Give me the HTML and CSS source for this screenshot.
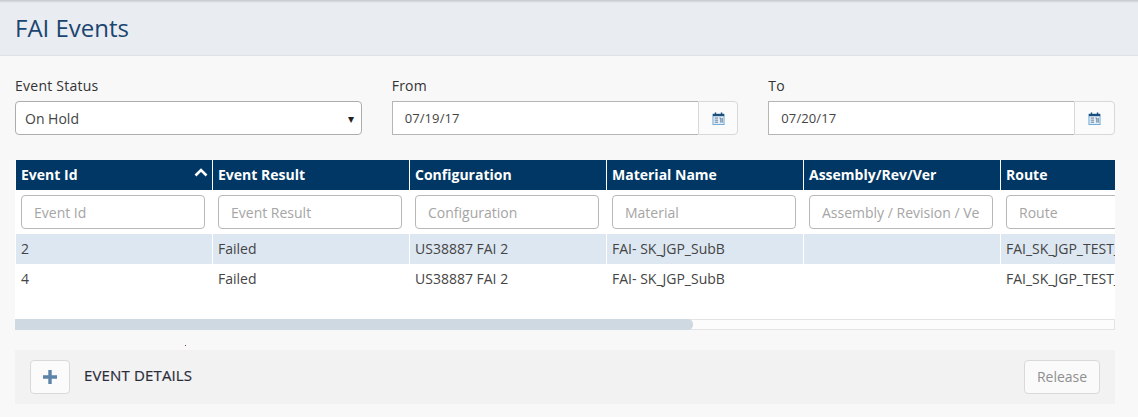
FILE: index.html
```html
<!DOCTYPE html>
<html lang="en">
<head>
    <meta charset="UTF-8">
    <title>FAI Events</title>
    <link rel="stylesheet" href="styles.css">
</head>
<body>
    <div class="page-header">
        <h1>FAI Events</h1>
    </div>

    <div class="content">
        <div class="filters">
            <div class="field">
                <label>Event Status</label>
                <div class="status-select">
                    <span>On Hold</span>
                    <span class="caret">&#9662;</span>
                </div>
            </div>
            <div class="field">
                <label>From</label>
                <div class="date-group">
                    <input class="date-input" type="text" value="07/19/17">
                    <span class="date-btn">
                        <svg class="cal-icon" viewBox="0 0 14 14" width="13" height="13">
                            <rect x="1" y="2.500" width="12" height="11" fill="#e3eef7" stroke="#6aa6d6"/>
                            <rect x="1" y="2" width="12" height="2.500" fill="#1d4f7c"/>
                            <rect x="3" y="0.500" width="1.500" height="2.500" fill="#1d4f7c"/>
                            <rect x="9.500" y="0.500" width="1.500" height="2.500" fill="#1d4f7c"/>
                            <path d="M3 6.500h3.500M3 8.800h3.500M3 11h3.500M8 6.500h1.500v5M11 6.500v5" stroke="#4a6b88" stroke-width="0.900" fill="none"/>
                        </svg>
                    </span>
                </div>
            </div>
            <div class="field">
                <label>To</label>
                <div class="date-group">
                    <input class="date-input" type="text" value="07/20/17">
                    <span class="date-btn">
                        <svg class="cal-icon" viewBox="0 0 14 14" width="13" height="13">
                            <rect x="1" y="2.500" width="12" height="11" fill="#e3eef7" stroke="#6aa6d6"/>
                            <rect x="1" y="2" width="12" height="2.500" fill="#1d4f7c"/>
                            <rect x="3" y="0.500" width="1.500" height="2.500" fill="#1d4f7c"/>
                            <rect x="9.500" y="0.500" width="1.500" height="2.500" fill="#1d4f7c"/>
                            <path d="M3 6.500h3.500M3 8.800h3.500M3 11h3.500M8 6.500h1.500v5M11 6.500v5" stroke="#4a6b88" stroke-width="0.900" fill="none"/>
                        </svg>
                    </span>
                </div>
            </div>
        </div>

        <div class="grid-wrap">
            <div class="grid-body">
                <table class="events-grid">
                    <thead>
                        <tr class="head-row">
                            <th class="sorted">Event Id
                                <svg class="sort-icon" viewBox="0 0 14 9" width="14" height="9">
                                    <path d="M1.500 7.500 7 2l5.500 5.500" fill="none" stroke="#fff" stroke-width="2.600"/>
                                </svg>
                            </th>
                            <th>Event Result</th>
                            <th>Configuration</th>
                            <th>Material Name</th>
                            <th>Assembly/Rev/Ver</th>
                            <th>Route</th>
                        </tr>
                        <tr class="filter-row">
                            <td><input type="text" placeholder="Event Id"></td>
                            <td><input type="text" placeholder="Event Result"></td>
                            <td><input type="text" placeholder="Configuration"></td>
                            <td><input type="text" placeholder="Material"></td>
                            <td><input type="text" placeholder="Assembly / Revision / Version"></td>
                            <td><input type="text" placeholder="Route"></td>
                        </tr>
                    </thead>
                    <tbody>
                        <tr class="selected">
                            <td>2</td>
                            <td>Failed</td>
                            <td>US38887 FAI 2</td>
                            <td>FAI- SK_JGP_SubB</td>
                            <td></td>
                            <td>FAI_SK_JGP_TEST_ROUTE</td>
                        </tr>
                        <tr>
                            <td>4</td>
                            <td>Failed</td>
                            <td>US38887 FAI 2</td>
                            <td>FAI- SK_JGP_SubB</td>
                            <td></td>
                            <td>FAI_SK_JGP_TEST_ROUTE</td>
                        </tr>
                    </tbody>
                </table>
            </div>
            <div class="grid-scroll">
                <div class="grid-thumb"></div>
            </div>
        </div>

        <div class="details-bar">
            <button class="expand-btn">
                <svg viewBox="0 0 14 14" width="14" height="14">
                    <path d="M7 0v14M0 7h14" stroke="#5d84a8" stroke-width="3.400" fill="none"/>
                </svg>
            </button>
            <span class="details-title">EVENT DETAILS</span>
            <button class="release-btn" disabled>Release</button>
        </div>
        <span class="stray-dot"></span>
    </div>
</body>
</html>
```

FILE: styles.css
```css
* {
    box-sizing: border-box;
}

html, body {
    height: 100%;
}

body {
    margin: 0;
    background-color: #f8f8f8;
    font-family: 'Open Sans', sans-serif;
    font-size: 14px;
    color: #333;
    overflow: hidden;
}

.page-header {
    height: 56px;
    padding: 11px 15px 0;
    background: linear-gradient(to bottom, #c4c7cc 0, #e9ecf1 3px);
    border-bottom: 1px solid #dfe1e4;
}

h1 {
    margin: 0;
    font-size: 24px;
    line-height: 33px;
    font-weight: 400;
    color: #1a4570;
}

.content {
    position: relative;
    padding: 20px 23px 0 15px;
}

.filters {
    display: grid;
    grid-template-columns: repeat(3, 1fr);
    gap: 30px;
}

.field label {
    display: block;
    height: 25px;
    line-height: 20px;
    letter-spacing: 0.25px;
    color: #333;
}

.status-select {
    display: flex;
    justify-content: space-between;
    align-items: center;
    height: 34px;
    padding: 0 7px 0 9px;
    background-color: #fff;
    border: 1px solid #adadad;
    border-radius: 4px;
    color: #444;
}

.caret {
    font-size: 12px;
    color: #222;
}

.date-group {
    display: flex;
    height: 34px;
}

.date-input {
    flex: 1;
    min-width: 0;
    padding: 0 12px;
    border: 1px solid #b5b5b5;
    border-right: none;
    background-color: #fff;
    font-family: inherit;
    font-size: 13px;
    letter-spacing: 0.1px;
    color: #444;
}

.date-btn {
    display: flex;
    width: 40.6px;
    align-items: center;
    justify-content: center;
    border: 1px solid #d8d8d8;
    border-radius: 0 4px 4px 0;
    background-color: #fbfbfb;
}

.grid-wrap {
    margin-top: 25px;
}

.grid-body {
    height: 159px;
    background-color: #fff;
    overflow: hidden;
}

.events-grid {
    border-collapse: separate;
    border-spacing: 0;
    table-layout: fixed;
    width: 1182px;
    margin-left: 1px;
}

.events-grid th,
.events-grid td {
    width: 197px;
    padding: 0 5px;
    text-align: left;
    white-space: nowrap;
    overflow: hidden;
}

.head-row th {
    position: relative;
    height: 30px;
    padding-bottom: 2px;
    background-color: #003764;
    border-right: 1px solid #fff;
    font-weight: 700;
    color: #fff;
}

.sort-icon {
    position: absolute;
    top: 8px;
    right: 4px;
}

.filter-row td {
    height: 44px;
    padding: 5px 7px 5px 5px;
    border: none;
}

.filter-row td:last-child {
    padding-right: 0;
}

.filter-row input {
    display: block;
    width: 184px;
    height: 34px;
    padding: 0 12px;
    border: 1px solid #b8b8b8;
    border-radius: 4px;
    background-color: #fff;
    font-family: inherit;
    font-size: 14px;
    color: #444;
}

.filter-row input::placeholder {
    color: #a5a5a5;
    opacity: 1;
}

.events-grid tbody td {
    height: 30px;
    padding-bottom: 2px;
    border-right: 1px solid #fff;
    color: #444;
}

.events-grid .selected td {
    background-color: #dde7f2;
}

.grid-scroll {
    height: 11px;
    border: 1px solid #e3e3e3;
    border-left: none;
    background-color: #fcfcfc;
    position: relative;
}

.grid-thumb {
    position: absolute;
    top: -1px;
    left: 0;
    width: 678px;
    height: 11px;
    border-radius: 0 5px 5px 0;
    background-color: #cfd9e2;
}

.details-bar {
    display: flex;
    align-items: center;
    height: 54px;
    margin-top: 20px;
    padding: 0 15px;
    background-color: #f2f2f2;
}

.expand-btn {
    display: flex;
    align-items: center;
    justify-content: center;
    width: 40px;
    height: 34px;
    padding: 0;
    border: 1px solid #d9d9d9;
    border-radius: 4px;
    background-color: #fbfbfb;
}

.details-title {
    margin-left: 14px;
    padding-bottom: 4px;
    font-size: 15px;
    letter-spacing: 0.15px;
    color: #2b2b3a;
    -webkit-text-stroke: 0.2px #2b2b3a;
}

.release-btn {
    margin-left: auto;
    width: 76px;
    height: 34px;
    padding: 0 0 2px;
    border: 1px solid #d9d9d9;
    border-radius: 4px;
    background-color: #fafafa;
    font-family: inherit;
    font-size: 14px;
    color: #8f8f8f;
}

.stray-dot {
    position: absolute;
    left: 185px;
    top: 289px;
    width: 1px;
    height: 1px;
    background-color: #7a3a3a;
}
```
